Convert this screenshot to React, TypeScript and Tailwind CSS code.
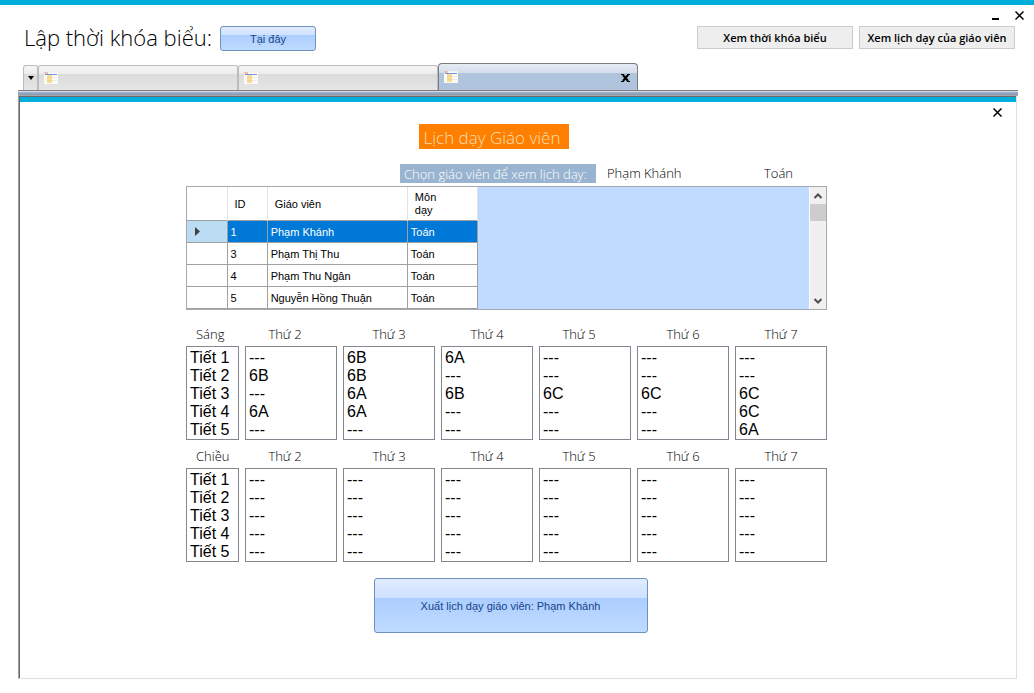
import React from "react";
import clsx from "clsx";

type Teacher = {
  id: number;
  name: string;
  subject: string;
}

type Day = {
  name: string;
  classes: string[];
  labelClass?: string;
}

type ScheduleProps = {
  id: string;
  session: string;
  days: Day[];
}

type TabProps = {
  label: string;
  active?: boolean;
}

const periods = ["Tiết 1", "Tiết 2", "Tiết 3", "Tiết 4", "Tiết 5"];

const teachers: Teacher[] = [
  { id: 1, name: "Phạm Khánh", subject: "Toán" },
  { id: 3, name: "Phạm Thị Thu", subject: "Toán" },
  { id: 4, name: "Phạm Thu Ngân", subject: "Toán" },
  { id: 5, name: "Nguyễn Hồng Thuận", subject: "Toán" },
];

const morning: Day[] = [
  { name: "Thứ 2", classes: ["---", "6B", "---", "6A", "---"], labelClass: "pr-3" },
  { name: "Thứ 3", classes: ["6B", "6B", "6A", "6A", "---"] },
  { name: "Thứ 4", classes: ["6A", "---", "6B", "---", "---"] },
  { name: "Thứ 5", classes: ["---", "---", "6C", "---", "---"], labelClass: "pr-3" },
  { name: "Thứ 6", classes: ["---", "---", "6C", "---", "---"] },
  { name: "Thứ 7", classes: ["---", "---", "6C", "6C", "6A"] },
];

const afternoon: Day[] = morning.map((day) => ({ ...day, classes: ["---", "---", "---", "---", "---"] }));

const CloseIcon = () => (
  <svg width="9" height="9" viewBox="0 0 9 9" stroke="#000" strokeWidth="1.5" fill="none">
    <path d="M0.5 0.5L8.5 8.5M8.5 0.5L0.5 8.5" />
  </svg>
)

const FormIcon = () => (
  <svg width="14" height="12" viewBox="0 0 14 12">
    <rect width="14" height="12" fill="#fbfaf6" />
    <rect width="14" height="1" fill="#f4f1ea" />
    <rect width="4" height="2" fill="#eac3b4" />
    <rect x="1" y="2" width="12" height="1" fill="#7590dc" />
    <rect x="3" y="3" width="5" height="8" fill="#f6dc98" />
    <path d="M3 5.5H8M3 8.5H8" stroke="#f2d48a" />
    <path d="M8 5.5H13M8 8.5H13" stroke="#ececec" />
  </svg>
)

const Tab = ({ label, active }: TabProps) => (
  <div
    role="tab"
    aria-label={label}
    aria-selected={!!active}
    className={clsx(
      "flex w-[200px] items-center justify-between border border-b-0 px-[5px]",
      active
        ? "h-[27px] rounded-t border-[#7c7c7c] bg-[linear-gradient(#e6ebf4_0px,#d4deec_9px,#b0c4de_9px,#b0c4de_100%)]"
        : "h-[25px] rounded-t-[3px] border-[#bcbcbc] bg-[linear-gradient(#f6f6f6_0px,#ececec_8px,#dbdbdb_8px,#e6e6e6_100%)]"
    )}
  >
    <FormIcon />
    {active && (
      <button aria-label="Đóng thẻ" className="mr-0.5 pt-0.5">
        <svg width="9" height="8" viewBox="0 0 9 8" stroke="#000" strokeWidth="2" fill="none">
          <path d="M1.5 0.5L7.5 7.5M7.5 0.5L1.5 7.5M0 0.5H3M6 0.5H9M0 7.5H3M6 7.5H9" strokeWidth="1" />
          <path d="M2 1L7 7M7 1L2 7" />
        </svg>
      </button>
    )}
  </div>
)

const ListBox = ({ id, items }: { id: string; items: string[] }) => (
  <select
    id={id}
    size={5}
    className="h-[94px] w-full appearance-none overflow-hidden border border-[#828790] bg-white pt-0.5 pl-px font-['Liberation_Sans',sans-serif] text-base leading-[18px] text-black"
  >
    {items.map((item, i) => (
      <option key={i} value={i} className="h-[18px] min-h-0 p-0 pl-0.5 leading-[18px]">{item}</option>
    ))}
  </select>
)

const Schedule = ({ id, session, days }: ScheduleProps) => (
  <div className="flex gap-1.5">
    <div className="flex w-[53px] flex-col">
      <label htmlFor={id} className="pl-2.5 text-[13px] leading-6 font-light">{session}</label>
      <ListBox id={id} items={periods} />
    </div>
    {days.map((day, i) => (
      <div key={day.name} className="flex flex-1 flex-col">
        <label htmlFor={`${id}-${i}`} className={clsx("text-center text-[13px] leading-6 font-light", day.labelClass)}>{day.name}</label>
        <ListBox id={`${id}-${i}`} items={day.classes} />
      </div>
    ))}
  </div>
)

const TeacherTable = ({ selected }: { selected: number }) => (
  <div className="flex h-[124px] justify-between border border-[#a5a9b1] bg-[#bfdbff] font-['Liberation_Sans',sans-serif] text-[11px]">
    <table className="w-[291px] table-fixed border-collapse bg-white text-left">
      <thead>
        <tr className="h-[33px] border-b border-[#a0a0a0] leading-[13px]">
          <th className="w-10 border-r border-[#e2e2e2]"></th>
          <th className="w-10 border-r border-[#e2e2e2] pt-0.5 pl-[7px] font-normal">ID</th>
          <th className="w-[140px] border-r border-[#e2e2e2] pt-0.5 pl-[7px] font-normal">Giáo viên</th>
          <th className="w-[70px] border-r border-[#e2e2e2] pt-0.5 pr-6 pl-[7px] font-normal">Môn dạy</th>
        </tr>
      </thead>
      <tbody>
        {teachers.map((t) => (
          <tr key={t.id} className={clsx("h-[22px] border-b border-[#a0a0a0]", t.id === selected && "text-white")}>
            <td className={clsx("border-r border-[#a0a0a0] pl-2", t.id === selected && "bg-[#bcdcf4]")}>
              {t.id === selected && (
                <svg width="6" height="9" viewBox="0 0 6 9" fill="#404040"><path d="M0 0L5 4.5L0 9Z" /></svg>
              )}
            </td>
            <td className={clsx("border-r border-[#a0a0a0] pt-0.5 pl-[3px]", t.id === selected && "bg-[#0078d7]")}>{t.id}</td>
            <td className={clsx("border-r border-[#a0a0a0] pt-0.5 pl-[3px]", t.id === selected && "bg-[#0078d7]")}>{t.name}</td>
            <td className={clsx("border-r border-[#a0a0a0] pt-0.5 pl-[3px]", t.id === selected && "bg-[#0078d7]")}>{t.subject}</td>
          </tr>
        ))}
      </tbody>
    </table>
    <div className="flex w-[17px] flex-col items-center border-l border-white bg-[#f0f0f0]">
      <button aria-label="Cuộn lên" className="flex h-[17px] w-full items-center justify-center">
        <svg width="8" height="6" viewBox="0 0 8 6" fill="none" stroke="#505050" strokeWidth="2"><path d="M0.5 5L4 1.5L7.5 5" /></svg>
      </button>
      <div className="h-[17px] w-full bg-[#cdcdcd]"></div>
      <button aria-label="Cuộn xuống" className="mt-auto flex h-[17px] w-full items-center justify-center">
        <svg width="8" height="6" viewBox="0 0 8 6" fill="none" stroke="#505050" strokeWidth="2"><path d="M0.5 1L4 4.5L7.5 1" /></svg>
      </button>
    </div>
  </div>
)

const App = () => {
  const teacher = teachers[0];

  return (
    <div className="flex min-h-screen flex-col border-t-[5px] border-[#00aedb] bg-white pb-[14px] font-['Open_Sans','Noto_Sans',sans-serif] text-black">
      <div className="flex h-[21px] items-center justify-end gap-4 pr-2.5">
        <button aria-label="Thu nhỏ" className="pt-1.5">
          <svg width="7" height="2" viewBox="0 0 7 2"><rect width="7" height="2" /></svg>
        </button>
        <button aria-label="Đóng"><CloseIcon /></button>
      </div>

      <header className="flex items-start justify-between pr-[19px] pl-6">
        <div className="flex items-start gap-2">
          <h1 className="text-[22px] leading-[23px] font-light whitespace-nowrap">Lập thời khóa biểu:</h1>
          <button className="h-[25px] w-24 rounded-[3px] border border-[#6f91c1] bg-[linear-gradient(#e0ecff_0%,#cde0ff_36%,#acceff_36%,#bfdbff_100%)] pt-0.5 font-['Liberation_Sans',sans-serif] text-[11px] text-[#15428b]">Tại đây</button>
        </div>
        <div className="flex gap-1.5 text-[11px] font-semibold">
          <button className="h-[23px] w-[156px] border border-[#ccc] bg-[#eee] pt-0.5">Xem thời khóa biểu</button>
          <button className="h-[23px] w-[156px] border border-[#ccc] bg-[#eee] pt-0.5 whitespace-nowrap">Xem lịch dạy của giáo viên</button>
        </div>
      </header>

      <div role="tablist" className="flex items-end pt-3 pl-[23px]">
        <button aria-label="Danh sách thẻ" className="flex h-[25px] w-[15px] items-center justify-center rounded-t-[3px] border border-b-0 border-[#bcbcbc] bg-[linear-gradient(#f6f6f6_0px,#ececec_8px,#dbdbdb_8px,#e6e6e6_100%)]">
          <svg width="6" height="4" viewBox="0 0 6 4"><path d="M0 0H6L3 4Z" /></svg>
        </button>
        <Tab label="Trang chính" />
        <Tab label="Thời khóa biểu" />
        <Tab label="Lịch dạy giáo viên" active />
      </div>
      <div className="mr-4 ml-[18px] h-[6px] border-t border-[#7c7c7c] bg-[linear-gradient(#d3dce9_0px,#d3dce9_1px,#a3b4cb_1px,#8296b2_4px,#a9a9a9_4px)]"></div>

      <main className="mr-[17px] ml-[18px] flex flex-1 flex-col border-r border-b border-l border-[#e0e0e0] border-l-[#a0a0a0]">
        <div className="flex flex-1 flex-col border-t border-l border-[#696969]">
          <div className="h-[5px] bg-[#00aedb]"></div>
          <div className="flex h-[22px] items-center justify-end pr-3.5 pb-0.5">
            <button aria-label="Đóng lịch dạy"><CloseIcon /></button>
          </div>

          <div className="flex flex-col items-center pr-[23px]">
            <div className="flex w-[641px] flex-col">
              <h2 className="mr-[26px] h-[25px] w-[150px] self-center bg-[#ff8000] pl-[5px] text-[17px] leading-[27px] font-light whitespace-nowrap text-[#f5deb3]">Lịch dạy Giáo viên</h2>
              <div className="flex items-center pt-[15px] pb-[3px] text-[13px] font-light">
                <span className="ml-[214px] h-[19px] w-[196px] bg-[#99b4d1] pl-1 leading-[21px] whitespace-nowrap text-white">Chọn giáo viên để xem lịch dạy:</span>
                <span className="ml-[11px] w-[157px] leading-[19px]">{teacher.name}</span>
                <span className="leading-[19px]">{teacher.subject}</span>
              </div>
              <TeacherTable selected={teacher.id} />
              <div className="flex flex-col pt-3">
                <Schedule id="sang" session="Sáng" days={morning} />
                <div className="h-1"></div>
                <Schedule id="chieu" session="Chiều" days={afternoon} />
              </div>
              <button className="mt-4 ml-2 h-[55px] w-[274px] self-center rounded-[3px] border border-[#6f91c1] bg-[linear-gradient(#e0ecff_0%,#cde0ff_36%,#acceff_36%,#bfdbff_100%)] pt-0.5 font-['Liberation_Sans',sans-serif] text-[11px] text-[#15428b]">
                Xuất lịch dạy giáo viên: {teacher.name}
              </button>
            </div>
          </div>
        </div>
      </main>
    </div>
  );
}

export default App;
